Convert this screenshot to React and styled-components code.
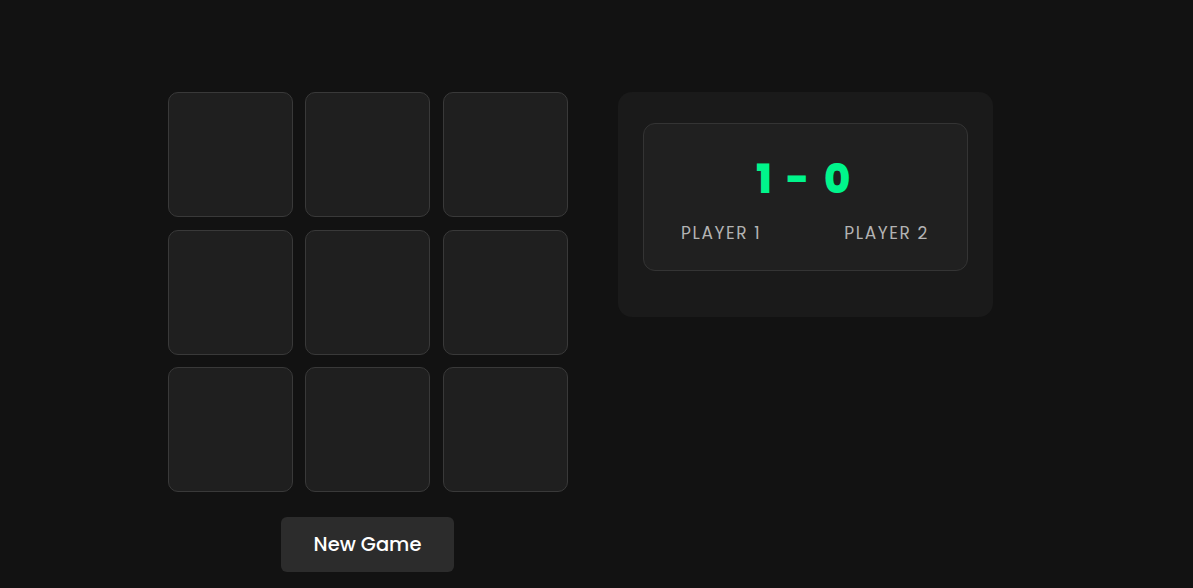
import React from "react";
import styled, { createGlobalStyle } from "styled-components";

const Global = createGlobalStyle`
  html, body { margin: 0; padding: 0; background: #121212; }
  body { font-family: "Poppins", "Open Sans", sans-serif; color: #fff; }
`;

const Page = styled.div`
  min-height: 588px;
  box-sizing: border-box;
  display: flex;
  justify-content: center;
  align-items: flex-start;
  gap: 50px;
  padding: 92px 33px 0 0;
`;

const GameColumn = styled.div`
  display: flex;
  flex-direction: column;
  align-items: center;
  gap: 25px;
`;

const Board = styled.div`
  display: grid;
  grid-template-columns: repeat(3, 125px);
  grid-auto-rows: 125px;
  gap: 12.5px;
  width: 400px;
`;

const Cell = styled.button`
  box-sizing: border-box;
  background: #1f1f1f;
  border: 1px solid #393939;
  border-radius: 10px;
  padding: 0;
  cursor: pointer;
`;

const NewGameButton = styled.button`
  width: 173px;
  height: 55px;
  background: #2c2c2c;
  border: none;
  border-radius: 6px;
  color: #fff;
  font-family: "Poppins", "Open Sans", sans-serif;
  font-size: 19.5px;
  font-weight: 500;
  cursor: pointer;
`;

const ScorePanel = styled.div`
  box-sizing: border-box;
  width: 375px;
  height: 225px;
  background: #1a1a1a;
  border-radius: 14px;
  padding: 31px 25px 0;
`;

const ScoreCard = styled.div`
  box-sizing: border-box;
  height: 148px;
  background: #202020;
  border: 1px solid #343434;
  border-radius: 12px;
  display: flex;
  flex-direction: column;
  align-items: center;
  padding-top: 26px;
`;

const Score = styled.div`
  color: #00f58b;
  font-size: 40px;
  font-weight: 800;
  letter-spacing: 3.5px;
  line-height: 58px;
`;

const Players = styled.div`
  display: flex;
  justify-content: space-between;
  width: 248px;
  margin-top: 13px;
`;

const PlayerLabel = styled.span`
  color: #b3b3b3;
  font-size: 17px;
  font-weight: 400;
  letter-spacing: 1.6px;
  line-height: 24px;
`;

export default function App() {
  const cells = Array.from({ length: 9 });
  return (
    <>
      <Global />
      <Page>
        <GameColumn>
          <Board>
            {cells.map((_, i) => (
              <Cell key={i} aria-label={`cell ${i + 1}`} />
            ))}
          </Board>
          <NewGameButton>New Game</NewGameButton>
        </GameColumn>
        <ScorePanel>
          <ScoreCard>
            <Score>1 - 0</Score>
            <Players>
              <PlayerLabel>PLAYER 1</PlayerLabel>
              <PlayerLabel>PLAYER 2</PlayerLabel>
            </Players>
          </ScoreCard>
        </ScorePanel>
      </Page>
    </>
  );
}
